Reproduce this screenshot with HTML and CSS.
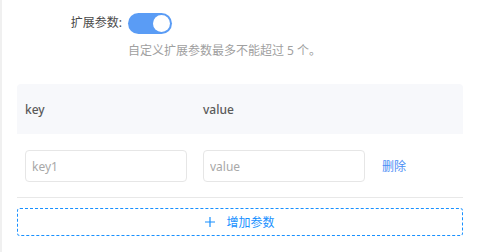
FILE: index.html
```html
<!DOCTYPE html>
<html>

<head>
    <meta charset="UTF-8">
    <meta name="viewport" content="width=device-width, initial-scale=1.0">
    <title>扩展参数</title>
    <link rel="stylesheet" href="styles.css">
</head>

<body>
    <div class="panel">
        <div class="form-item">
            <label class="form-label">扩展参数:</label>
            <div class="form-control">
                <span class="switch is-on"><span class="switch-knob"></span></span>
            </div>
        </div>
        <div class="form-hint">自定义扩展参数最多不能超过 5 个。</div>

        <table class="param-table">
            <thead>
                <tr>
                    <th class="col-key">key</th>
                    <th class="col-value">value</th>
                    <th class="col-op"></th>
                </tr>
            </thead>
            <tbody>
                <tr>
                    <td><input class="input" type="text" placeholder="key1"></td>
                    <td><input class="input" type="text" placeholder="value"></td>
                    <td><a class="link-btn" href="#">删除</a></td>
                </tr>
            </tbody>
        </table>

        <button class="add-btn" type="button">
            <svg class="add-icon" width="10" height="10" viewBox="0 0 10 10">
                <path d="M5 0 V10 M0 5 H10" stroke="#1890ff" stroke-width="1.2" fill="none" />
            </svg>
            <span>增加参数</span>
        </button>
    </div>
</body>

</html>
```

FILE: styles.css
```css
body {
    margin: 0;
    font-family: "Noto Sans", "Noto Sans CJK SC", sans-serif;
    font-size: 12px;
    color: #333;
    background: #fff;
}

.panel {
    border-left: 2px solid #f0f0f0;
    min-height: 252px;
    box-sizing: border-box;
    padding: 12px 15px 0 15px;
}

.form-item {
    display: flex;
    align-items: center;
    height: 22px;
}

.form-label {
    width: 105px;
    text-align: right;
    padding-right: 6px;
    font-weight: 400;
    color: #4a4a4a;
    line-height: 22px;
}

.switch {
    display: block;
    position: relative;
    width: 44px;
    height: 21px;
    border-radius: 11px;
    background: #5a9cf5;
}

.switch-knob {
    position: absolute;
    top: 2px;
    right: 2px;
    width: 17px;
    height: 17px;
    border-radius: 50%;
    background: #fff;
}

.form-hint {
    margin: 9px 0 0 111px;
    color: #a0a0a0;
    line-height: 16px;
}

.param-table {
    width: 100%;
    margin-top: 25px;
    border-collapse: separate;
    border-spacing: 0;
    table-layout: fixed;
    font: inherit;
}

.param-table th {
    height: 50px;
    box-sizing: border-box;
    padding: 0 8px;
    background: #f7f8fb;
    text-align: left;
    font-weight: 500;
    color: #5a5a5a;
}

.param-table th:first-child {
    border-top-left-radius: 4px;
}

.param-table th:last-child {
    border-top-right-radius: 4px;
}

.col-key,
.col-value {
    width: 178px;
}

.param-table td {
    padding: 16px 8px 15px 8px;
    border-bottom: 1px solid #e8e8e8;
    vertical-align: middle;
}

.input {
    display: block;
    width: 100%;
    height: 32px;
    box-sizing: border-box;
    padding: 0 6px;
    border: 1px solid #e6e6e6;
    border-radius: 4px;
    font-family: inherit;
    font-size: 12px;
    color: #333;
    outline: none;
}

.input::placeholder {
    color: #a8a8a8;
}

.link-btn {
    color: #4b8df5;
    text-decoration: none;
    margin-left: 1px;
}

.add-btn {
    display: flex;
    align-items: center;
    justify-content: center;
    gap: 11px;
    width: 100%;
    height: 28px;
    margin-top: 10px;
    background: #fff;
    border: 1px dashed #1890ff;
    border-radius: 3px;
    color: #1890ff;
    font-family: inherit;
    font-size: 12px;
    cursor: pointer;
}
```
